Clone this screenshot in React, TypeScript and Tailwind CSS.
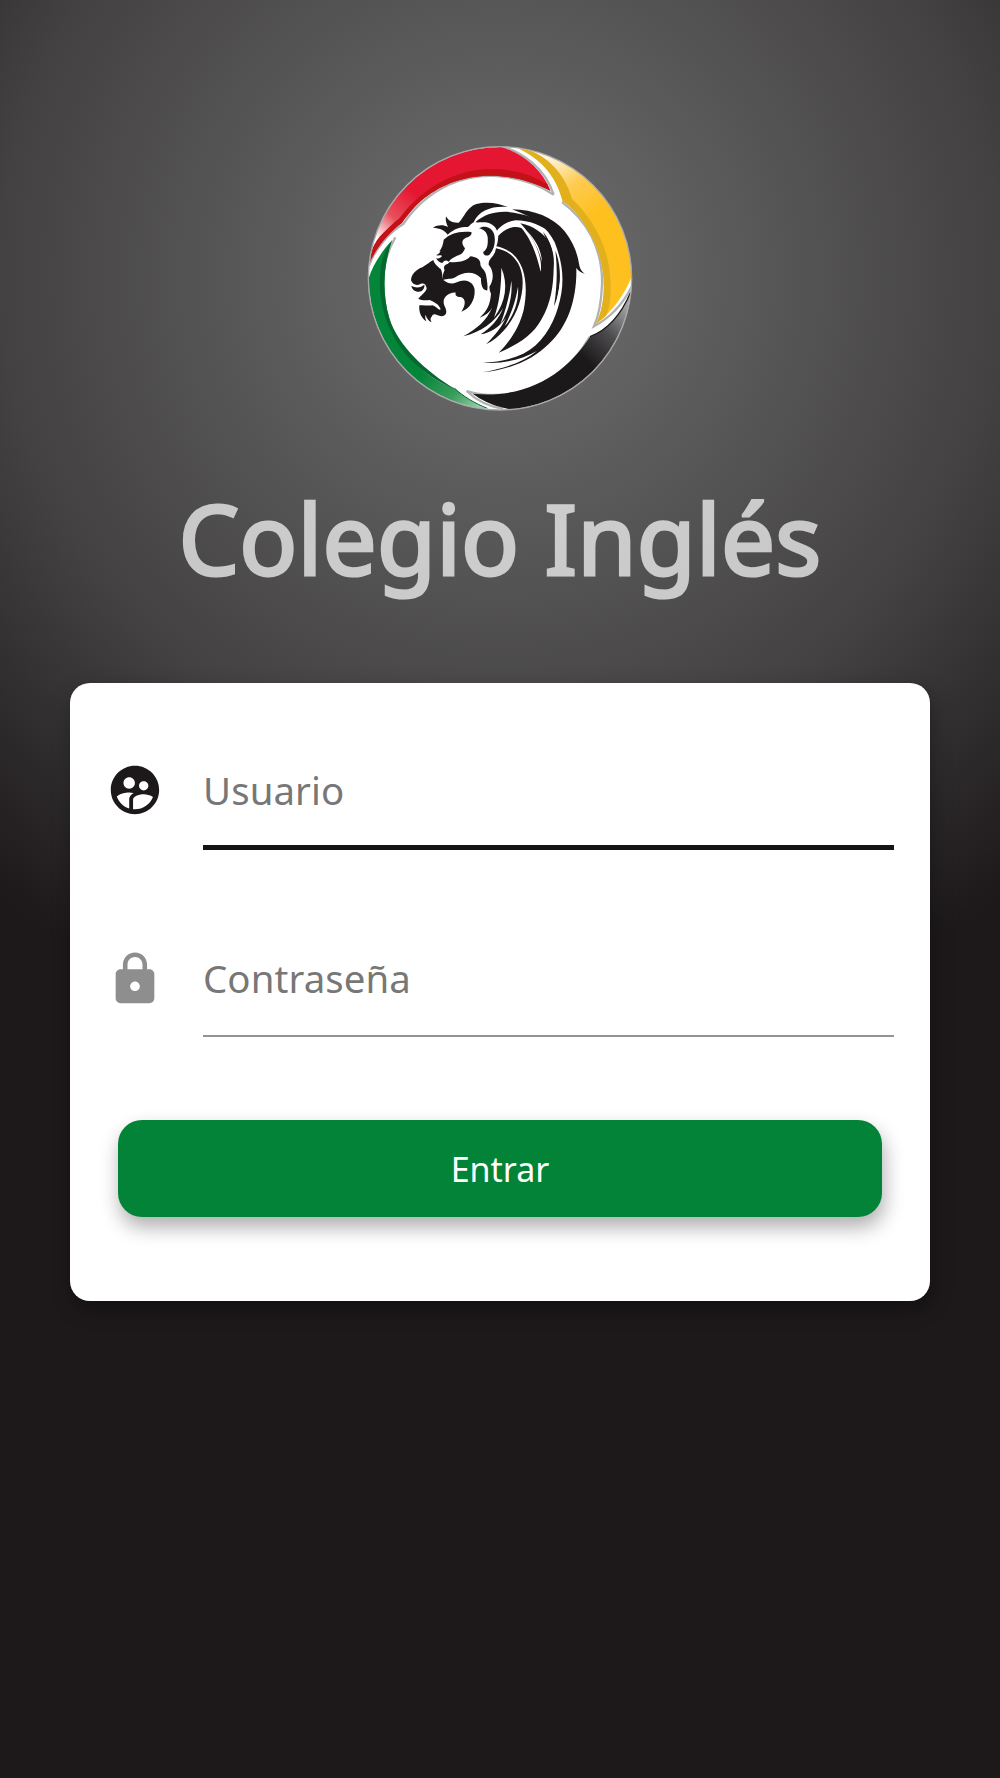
import React from 'react';
import { MdLock, MdSupervisedUserCircle } from 'react-icons/md';

function Logo() {
  return <svg viewBox="0 0 840 855" className="w-[280px] h-[285px]" aria-label="Colegio Inglés">
      <defs>
        <linearGradient id="red" gradientUnits="userSpaceOnUse" x1="50" y1="310" x2="170" y2="180">
          <stop offset="0" stopColor="#fff" />
          <stop offset="0.45" stopColor="#e8505c" />
          <stop offset="1" stopColor="#e51632" />
        </linearGradient>
        <linearGradient id="yellow" gradientUnits="userSpaceOnUse" x1="560" y1="70" x2="690" y2="250">
          <stop offset="0" stopColor="#fff6e0" />
          <stop offset="0.5" stopColor="#fecb50" />
          <stop offset="1" stopColor="#fec01f" />
        </linearGradient>
        <linearGradient id="black" gradientUnits="userSpaceOnUse" x1="810" y1="520" x2="670" y2="670">
          <stop offset="0" stopColor="#a5a5a8" />
          <stop offset="0.5" stopColor="#4a494b" />
          <stop offset="1" stopColor="#1c191b" />
        </linearGradient>
        <linearGradient id="green" gradientUnits="userSpaceOnUse" x1="370" y1="850" x2="200" y2="700">
          <stop offset="0" stopColor="#b9e0c4" />
          <stop offset="0.5" stopColor="#3a9d5c" />
          <stop offset="1" stopColor="#058539" />
        </linearGradient>
        <clipPath id="disc">
          <circle cx="420" cy="430" r="394" />
        </clipPath>
      </defs>
      <circle cx="420" cy="430" r="395" fill="#fff" />
      <g clipPath="url(#disc)">
        {/* grey bevel of the inner disc */}
        <g fill="none" stroke="#b2b2b4" strokeWidth="7">
          <path d="M581 179C500 125 375 100 265 150C205 178 160 222 130 267C90 290 45 340 27 392" />
          <path d="M418 32C488 50 556 100 581 179" />
          <path d="M606 201C680 255 729 340 726 450C724 500 715 545 702 574C750 548 790 505 815 455" />
          <path d="M690 605C640 690 560 768 430 779C390 782 350 777 320 768C350 797 385 815 430 821" />
          <path d="M106 307C60 385 56 490 92 577C127 662 200 727 284 764" />
        </g>
        {/* coloured ribbons */}
        <path d="M24 394C0 270 60 140 160 80C255 20 335 10 414 33C484 52 546 100 571 167C480 120 370 105 270 145C200 175 165 210 126 264C90 290 50 335 24 394Z" fill="url(#red)" />
        <path d="M24 394C28 355 42 325 60 304C80 284 100 264 118 250C180 165 290 92 420 103C478 108 520 122 562 148L571 167C480 120 370 105 270 145C200 175 165 210 126 264C90 290 50 335 24 394Z" fill="#c31217" />
        <path d="M452 30C620 10 760 125 800 245C825 300 824 370 815 425C792 480 762 525 708 567C745 490 740 370 680 278C660 245 635 215 608 199C590 130 550 70 452 30Z" fill="url(#yellow)" />
        <path d="M452 30L505 44C575 70 620 130 636 192C700 250 745 340 750 420C755 470 750 520 738 543L708 567C745 490 740 370 680 278C660 245 635 215 608 199C590 130 550 70 452 30Z" fill="#e3b01d" />
        <path d="M815 466C830 605 735 730 630 790C565 830 480 835 422 816C390 808 365 795 338 776C440 787 530 760 600 705C640 672 668 640 690 605C745 585 788 535 815 466Z" fill="url(#black)" />
        <path d="M812 472C785 535 745 585 690 605" fill="none" stroke="#1c191b" strokeWidth="4" />
        <path d="M96 316C65 350 38 390 26 430C10 560 90 700 190 770C245 810 315 825 382 820C345 805 310 785 284 760C200 735 115 650 88 550C65 470 70 390 96 316Z" fill="url(#green)" />
        <path d="M96 316C80 340 66 365 62 400C50 500 82 600 150 672C190 712 235 742 284 762C200 710 115 635 88 550C65 470 70 390 96 316Z" fill="#04692f" />
        <path d="M284 760C310 785 345 805 382 820" fill="none" stroke="#04692f" strokeWidth="3" />
      </g>
      <circle cx="420" cy="430" r="395" fill="none" stroke="#a9a9ab" strokeWidth="4" />
      {/* lion: crest and upper mane */}
      <g fill="#1d191b">
        <path d="M219 278C235 268 252 270 264 276C258 264 256 254 258 244C266 258 276 264 296 263C314 246 319 218 349 207C382 198 418 205 444 216C402 212 359 222 341 262C330 267 330 275 322 276C301 276 283 281 263 299C255 286 240 279 219 278Z" />
        <path d="M346 262C380 231 430 223 480 237C526 246 563 266 583 303C548 270 507 256 467 256C443 258 421 273 411 287C406 273 390 263 375 262C364 261 355 263 346 262Z" />
        <path d="M456 223C521 224 580 247 614 289C640 322 652 355 657 386C660 402 665 410 675 416C665 414 656 409 649 399C651 492 624 574 566 627C524 669 457 704 367 712C435 700 488 682 531 648C480 675 430 687 369 683C436 681 490 664 527 631C571 591 594 533 604 475C613 420 603 370 584 322C562 278 524 248 456 223Z" />
        <path d="M415 302C434 281 459 271 484 279C505 303 525 338 542 410C548 372 529 315 481 265C521 273 551 295 567 322C578 344 584 365 581 401C580 452 573 503 545 552C517 604 468 631 416 653C455 614 479 573 491 525C507 445 492 381 452 352C437 342 423 337 409 334C414 322 414 312 415 302Z" />
        <path d="M549 290C569 313 584 355 576 378C571 344 563 320 549 290Z" />
        <path d="M586 347C606 395 604 465 582 514C591 458 593 402 586 347Z" />
        {/* inner mane strands */}
        <path d="M408 340C452 348 480 377 487 425C493 480 471 543 430 588C416 603 400 617 378 628C406 600 425 575 438 548C417 578 390 593 362 598C393 579 416 552 429 520C402 563 365 591 310 604C350 583 381 555 397 517C389 532 377 542 359 548C382 527 391 506 393 476C389 468 389 462 388 455C402 435 402 408 386 389C386 371 397 369 405 352Z" />
      </g>
      <g fill="#fff">
        <path d="M424 398C445 447 438 500 402 548C419 503 424 450 424 398Z" />
        <path d="M454 437C459 486 443 536 421 568C438 524 448 486 454 437Z" />
        <path d="M474 455C478 500 459 545 434 574C454 533 466 503 474 455Z" />
        <path d="M501 288C533 322 544 350 546 382C537 343 521 316 501 288Z" />
        <path d="M604 402C609 445 602 486 586 517C596 472 601 440 604 402Z" />
      </g>
      {/* ear, brow and face */}
      <g fill="#1d191b">
        <path d="M357 280C372 269 395 277 402 296C408 318 403 343 390 357C384 366 367 361 370 350C384 342 384 323 383 306C380 291 372 284 357 280Z" />
        <path d="M237 350C246 340 250 325 251 314C271 296 295 287 334 291C337 300 329 306 318 308C304 314 304 327 315 340C310 354 303 360 291 362C282 368 272 370 266 380C258 374 252 376 247 384C239 383 231 376 228 369C235 373 242 369 246 363C243 358 235 364 229 360C236 358 242 351 241 347Z" />
        <path d="M269 381C292 384 319 379 331 364C346 365 361 373 361 385C360 400 375 402 378 419C381 437 384 453 382 466C370 468 362 453 363 430C342 407 311 410 286 427C273 434 260 430 249 435C247 424 249 415 254 405C249 396 254 389 263 387Z" />
        <path d="M153 436C154 420 165 405 187 397C200 389 209 381 220 375C224 389 234 395 242 402C248 412 246 426 250 435C271 452 286 444 301 438C323 431 343 445 344 466C345 496 330 521 304 530C318 510 318 491 302 486C289 485 285 481 287 473C272 471 252 482 251 499C250 513 259 517 259 531C258 544 243 546 233 541C224 536 219 536 215 545C210 548 211 556 215 562C206 558 199 549 197 539C194 546 197 553 199 559C183 549 176 531 178 511C190 509 204 513 217 511C229 514 238 529 242 523C237 507 222 501 209 495C198 496 186 497 175 492C181 481 195 475 200 461C199 449 192 443 181 447C169 454 158 448 153 436Z" />
        <path d="M154 452C168 461 184 457 193 449C195 459 187 470 176 470C164 470 156 463 154 452Z" />
      </g>
    </svg>;
}

type FieldProps = {
  icon: React.ReactNode;
  label: string;
  type: string;
  line: string;
};

function Field({ icon, label, type, line }: FieldProps) {
  return <div className="flex h-[188px]">
      <div className="w-[97px] h-[58px] shrink-0">{icon}</div>
      <div className="w-[691px] h-[58px]">
        <input type={type} placeholder={label} className="block w-full h-[58px] text-[38.4px] tracking-[0.1px] text-[#222] placeholder:text-[#777] outline-none" />
        <div className={line} />
      </div>
    </div>;
}

export default function App() {
  return <main className="min-h-[1778px] w-[1000px] overflow-hidden flex flex-col items-center pt-[135px] bg-[radial-gradient(circle_795px_at_500px_275px,#707070_0%,#434142_63%,#1d191a_100%)] font-['Noto_Sans',sans-serif]">
      <Logo />
      <h1 className="mt-[48px] h-[140px] text-[96px] leading-[140px] tracking-[0.2px] text-white opacity-70 [-webkit-text-stroke:3px_white] whitespace-nowrap">
        Colegio Inglés
      </h1>
      <form className="mt-[75px] w-[860px] h-[618px] rounded-[20px] bg-white pt-[78px] pl-9 shadow-[2px_8px_20px_rgba(0,0,0,0.35)]">
        <Field icon={<MdSupervisedUserCircle className="size-[58px] text-[#1d191a]" />} label="Usuario" type="text" line="mt-[26px] h-[5px] bg-[#151515]" />
        <Field icon={<MdLock className="mt-[0.5px] size-[58px] text-[#8e8e8e]" />} label="Contraseña" type="password" line="mt-[28px] h-[2px] bg-[#939393]" />
        <button type="button" className="block mt-[-17px] ml-3 w-[764px] h-[97px] rounded-3xl bg-[#028338] pt-[2px] text-[34px] text-white shadow-[2px_10px_20px_rgba(0,0,0,0.32)]">
          Entrar
        </button>
      </form>
    </main>;
}
